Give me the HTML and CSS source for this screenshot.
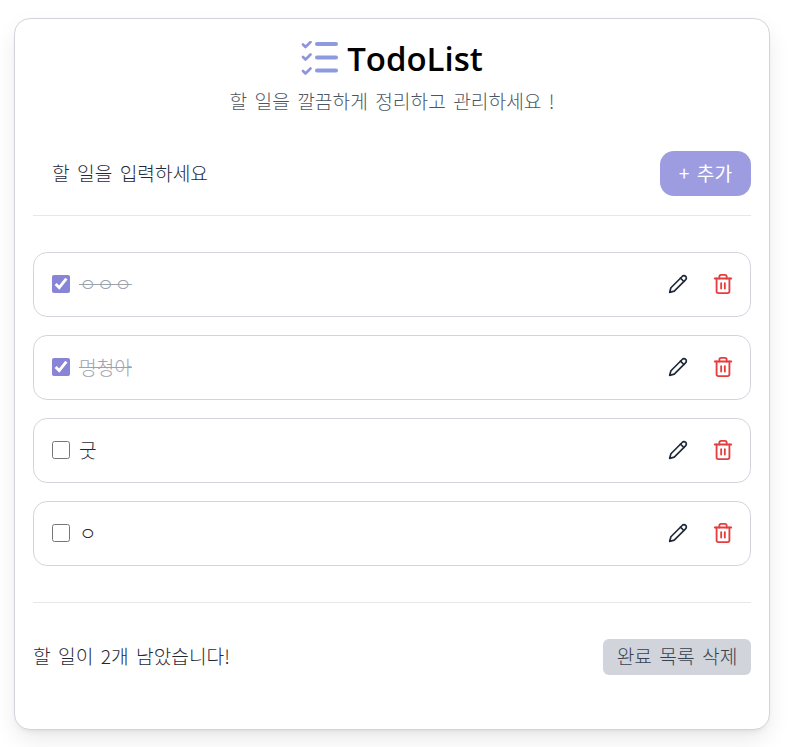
FILE: index.html
```html
<!DOCTYPE html>
<html lang="ko">
<head>
    <meta charset="UTF-8">
    <meta name="viewport" content="width=device-width, initial-scale=1.0">
    <title>TodoList</title>
    <link rel="stylesheet" href="styles.css">
</head>
<body>
    <div class="container">
        <div class="header">
            <svg class="logo" viewBox="0 0 37 37" fill="none">
                <path class="logo-check" d="M2 3.5l2.5 2.5 5-5M2 16l2.5 2.5 5-5M2 30l2.5 2.5 5-5"/>
                <path class="logo-bar" d="M16 3h19M16 16.5h19M16 29.5h19"/>
            </svg>
            <h1 class="title">TodoList</h1>
        </div>
        <p class="sub-header">할 일을 깔끔하게 정리하고 관리하세요 !</p>

        <div class="add-row">
            <input class="add-input" type="text" placeholder="할 일을 입력하세요">
            <button class="add-button">+ 추가</button>
        </div>

        <ul class="todo-list">
            <li class="todo">
                <input class="todo-check" type="checkbox" checked>
                <span class="todo-text done">ㅇㅇㅇ</span>
                <button class="icon-button"><svg class="icon-edit" viewBox="0 0 24 24"><path d="M17 3a2.85 2.83 0 1 1 4 4L7.5 20.5 2 22l1.5-5.5Z"/><path d="m15 5 4 4"/></svg></button>
                <button class="icon-button"><svg class="icon-delete" viewBox="0 0 24 24"><path d="M3 6h18"/><path d="M19 6v14a2 2 0 0 1-2 2H7a2 2 0 0 1-2-2V6"/><path d="M8 6V4a2 2 0 0 1 2-2h4a2 2 0 0 1 2 2v2"/><path d="M10 11v6"/><path d="M14 11v6"/></svg></button>
            </li>
            <li class="todo">
                <input class="todo-check" type="checkbox" checked>
                <span class="todo-text done">멍청아</span>
                <button class="icon-button"><svg class="icon-edit" viewBox="0 0 24 24"><path d="M17 3a2.85 2.83 0 1 1 4 4L7.5 20.5 2 22l1.5-5.5Z"/><path d="m15 5 4 4"/></svg></button>
                <button class="icon-button"><svg class="icon-delete" viewBox="0 0 24 24"><path d="M3 6h18"/><path d="M19 6v14a2 2 0 0 1-2 2H7a2 2 0 0 1-2-2V6"/><path d="M8 6V4a2 2 0 0 1 2-2h4a2 2 0 0 1 2 2v2"/><path d="M10 11v6"/><path d="M14 11v6"/></svg></button>
            </li>
            <li class="todo">
                <input class="todo-check" type="checkbox">
                <span class="todo-text">굿</span>
                <button class="icon-button"><svg class="icon-edit" viewBox="0 0 24 24"><path d="M17 3a2.85 2.83 0 1 1 4 4L7.5 20.5 2 22l1.5-5.5Z"/><path d="m15 5 4 4"/></svg></button>
                <button class="icon-button"><svg class="icon-delete" viewBox="0 0 24 24"><path d="M3 6h18"/><path d="M19 6v14a2 2 0 0 1-2 2H7a2 2 0 0 1-2-2V6"/><path d="M8 6V4a2 2 0 0 1 2-2h4a2 2 0 0 1 2 2v2"/><path d="M10 11v6"/><path d="M14 11v6"/></svg></button>
            </li>
            <li class="todo">
                <input class="todo-check" type="checkbox">
                <span class="todo-text">ㅇ</span>
                <button class="icon-button"><svg class="icon-edit" viewBox="0 0 24 24"><path d="M17 3a2.85 2.83 0 1 1 4 4L7.5 20.5 2 22l1.5-5.5Z"/><path d="m15 5 4 4"/></svg></button>
                <button class="icon-button"><svg class="icon-delete" viewBox="0 0 24 24"><path d="M3 6h18"/><path d="M19 6v14a2 2 0 0 1-2 2H7a2 2 0 0 1-2-2V6"/><path d="M8 6V4a2 2 0 0 1 2-2h4a2 2 0 0 1 2 2v2"/><path d="M10 11v6"/><path d="M14 11v6"/></svg></button>
            </li>
        </ul>

        <div class="footer">
            <span class="remaining">할 일이 2개 남았습니다!</span>
            <button class="clear-button">완료 목록 삭제</button>
        </div>
    </div>
</body>
</html>
```

FILE: styles.css
```css
* {
    box-sizing: border-box;
}
body {
    margin: 0;
    padding: 18px 0 17px 14px;
    background-color: white;
    color: #1f2937;
    font-family: "Noto Sans CJK KR", "Noto Sans", sans-serif;
    font-weight: 300;
    font-size: 19.2px;
    word-spacing: 2px;
}
button, input {
    font-family: inherit;
    font-weight: inherit;
    font-size: inherit;
    word-spacing: inherit;
}
.container {
    width: 756px;
    height: 712px;
    padding: 18px;
    background-color: white;
    border: 1px solid #d1d5db;
    border-radius: 16px;
    box-shadow: 0 10px 25px -3px rgba(0,0,0,0.1), 0 4px 6px -4px rgba(0,0,0,0.1);
}
.header {
    display: flex;
    justify-content: center;
    align-items: center;
    gap: 9px;
    height: 44px;
}
.logo {
    width: 37px;
    height: 37px;
}
.logo-check {
    stroke: #8f95dc;
    stroke-width: 2.6;
    stroke-linecap: round;
    stroke-linejoin: round;
}
.logo-bar {
    stroke: #8c9be0;
    stroke-width: 4;
    stroke-linecap: round;
}
.title {
    margin: 0;
    font-family: "Open Sans", sans-serif;
    font-size: 33px;
    font-weight: 600;
    line-height: 44px;
    color: black;
}
.sub-header {
    margin: 7px 0 0 0;
    height: 26px;
    text-align: center;
    line-height: 26px;
    color: #4b5563;
}
.add-row {
    display: flex;
    align-items: center;
    margin-top: 37px;
    padding-bottom: 19px;
    border-bottom: 1px solid #e5e7eb;
}
.add-input {
    flex: 1;
    height: 45px;
    padding: 0 19px 1px;
    border: none;
    outline: none;
    background: none;
    color: #1f2937;
}
.add-input::placeholder {
    color: #1f2937;
}
.add-button {
    width: 91px;
    height: 45px;
    padding: 0 0 1px;
    border: none;
    border-radius: 14px;
    background-color: #9d9ce0;
    color: white;
    font-weight: 400;
    cursor: pointer;
}
.todo-list {
    display: flex;
    flex-direction: column;
    gap: 18px;
    margin: 36px 0 0 0;
    padding: 0 0 36px 0;
    list-style: none;
    border-bottom: 1px solid #e5e7eb;
}
.todo {
    display: flex;
    align-items: center;
    height: 65px;
    padding: 0 16px 1px 18px;
    border: 1px solid #d1d5db;
    border-radius: 14px;
}
.todo-check {
    width: 18px;
    height: 18px;
    margin: 0 9px 0 0;
    accent-color: #8884d8;
}
.todo-text {
    flex: 1;
    padding-bottom: 1px;
}
.todo-text.done {
    color: #9ca3af;
    text-decoration: line-through;
}
.icon-button {
    display: flex;
    padding: 0;
    margin-left: 24px;
    border: none;
    background: none;
    cursor: pointer;
}
.icon-button svg {
    fill: none;
    stroke-width: 2;
    stroke-linecap: round;
    stroke-linejoin: round;
}
.icon-edit {
    width: 20px;
    height: 20px;
    stroke: #1f2937;
}
.icon-delete {
    width: 22px;
    height: 22px;
    stroke: #e53e3e;
}
.footer {
    display: flex;
    justify-content: space-between;
    align-items: center;
    margin-top: 36px;
}
.remaining {
    padding-bottom: 3px;
}
.clear-button {
    width: 148px;
    height: 36px;
    padding: 0 0 3px;
    border: none;
    border-radius: 6px;
    background-color: #d1d5db;
    color: #374151;
    cursor: pointer;
}
```
